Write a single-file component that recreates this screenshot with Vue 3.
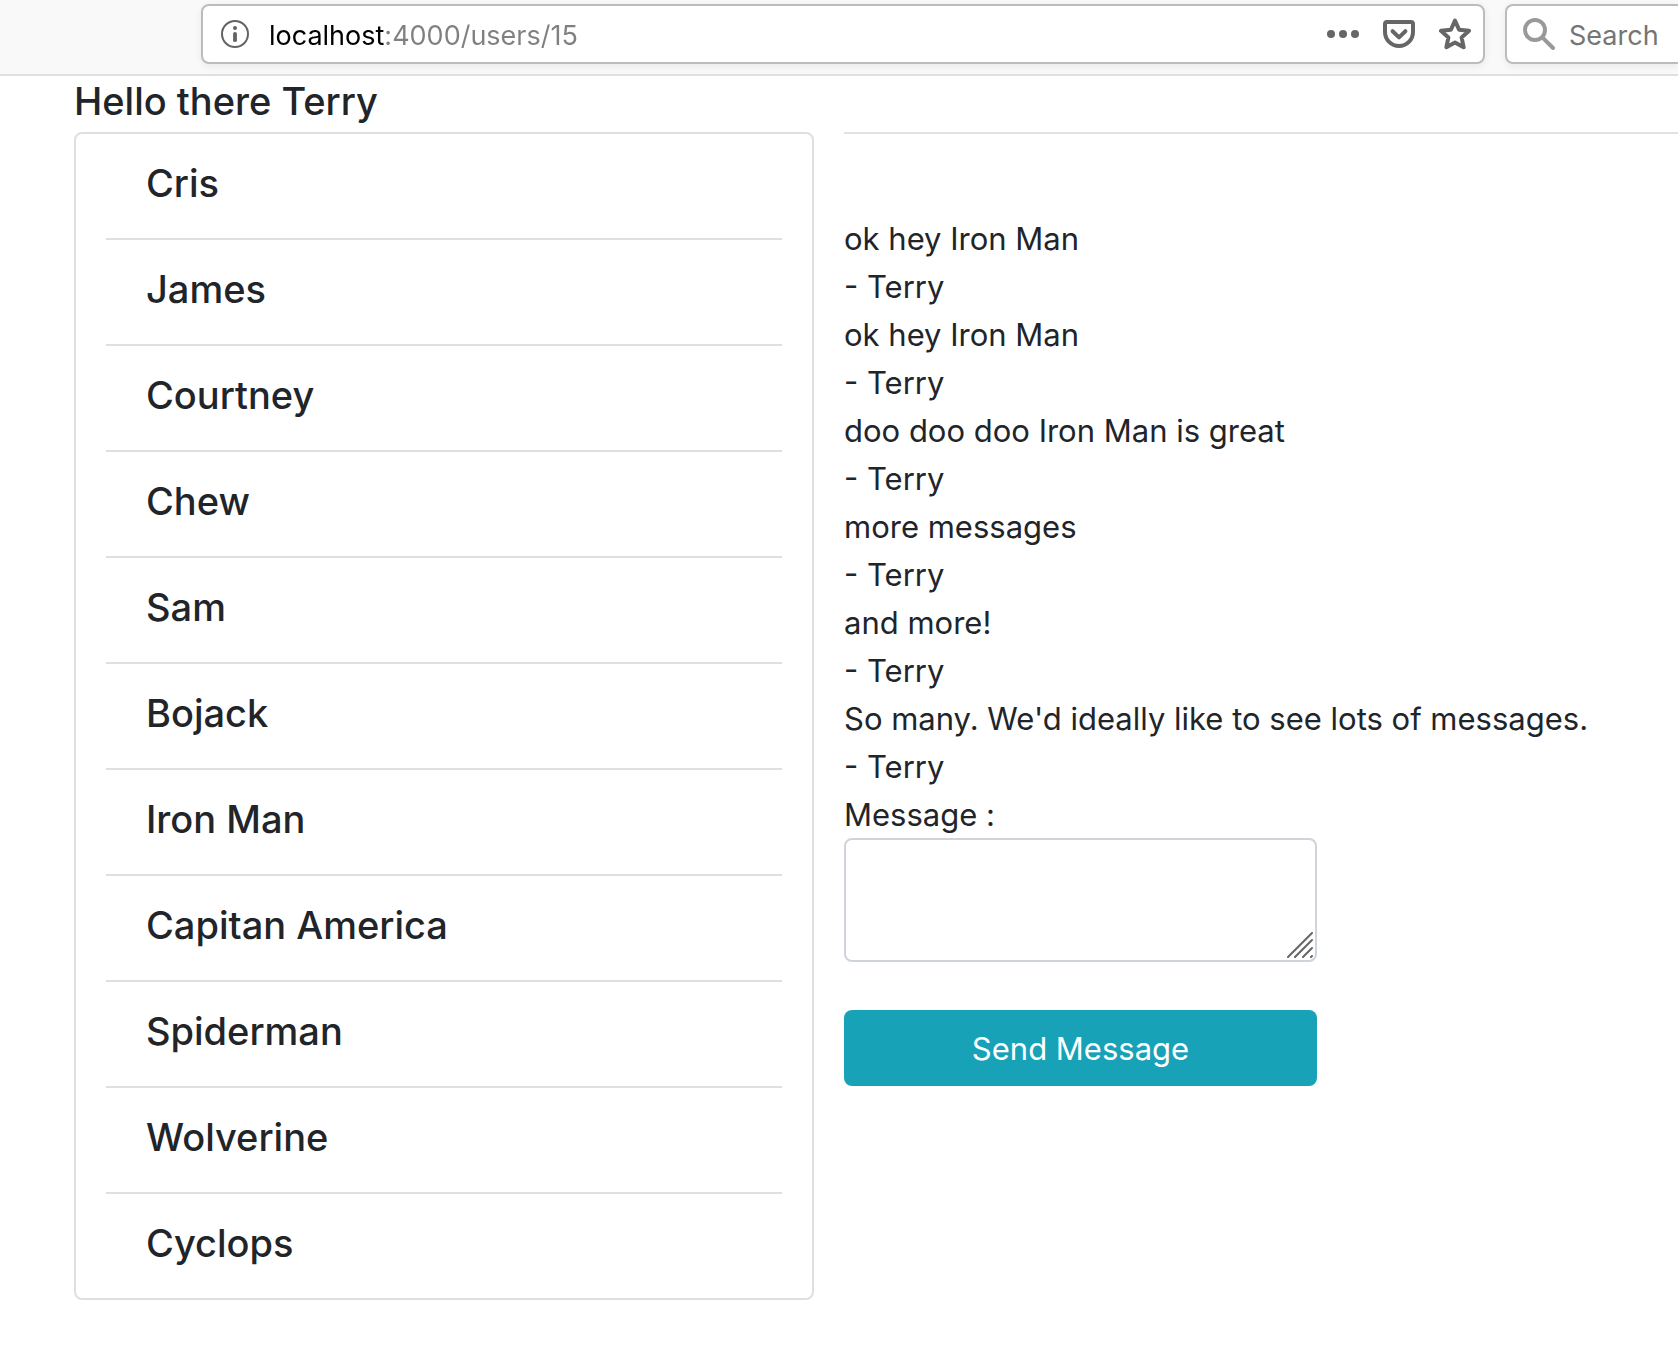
<script setup>
import { ref } from 'vue'

const address = ref('localhost:4000/users/15')
const search = ref('')
const draft = ref('')

const users = [
  'Cris',
  'James',
  'Courtney',
  'Chew',
  'Sam',
  'Bojack',
  'Iron Man',
  'Capitan America',
  'Spiderman',
  'Wolverine',
  'Cyclops',
]

const messages = ref([
  { text: 'ok hey Iron Man', author: 'Terry' },
  { text: 'ok hey Iron Man', author: 'Terry' },
  { text: 'doo doo doo Iron Man is great', author: 'Terry' },
  { text: 'more messages', author: 'Terry' },
  { text: 'and more!', author: 'Terry' },
  { text: "So many. We'd ideally like to see lots of messages.", author: 'Terry' },
])

function send() {
  const text = draft.value.trim()
  if (!text) return
  messages.value.push({ text, author: 'Terry' })
  draft.value = ''
}
</script>

<template>
  <div class="window">
    <header class="toolbar">
      <div class="field address">
        <button class="icon-button" type="button" aria-label="Site information">
          <svg width="28" height="28" viewBox="0 0 28 28">
            <circle cx="14" cy="14" r="13" fill="none" stroke="#636363" stroke-width="2" />
            <circle cx="14" cy="8" r="2" fill="#636363" />
            <path d="M14 13.8v6.4" stroke="#636363" stroke-width="3.8" stroke-linecap="round" />
          </svg>
        </button>
        <input v-model="address" class="address-input" type="text" aria-label="Address" spellcheck="false" />
        <div class="actions">
          <button class="icon-button" type="button" aria-label="Page actions">
            <svg width="32" height="32" viewBox="0 0 32 32" fill="#666">
              <circle cx="4" cy="16" r="4" />
              <circle cx="16" cy="16" r="4" />
              <circle cx="28" cy="16" r="4" />
            </svg>
          </button>
          <button class="icon-button" type="button" aria-label="Save to Pocket">
            <svg width="32" height="32" viewBox="0 0 32 32" fill="none" stroke="#666" stroke-width="4" stroke-linecap="round" stroke-linejoin="round">
              <path d="M4 4h24a2 2 0 0 1 2 2v8a14 14 0 0 1-28 0V6a2 2 0 0 1 2-2z" />
              <path d="M9.6 13.2l6.4 6.2 6.4-6.2" />
            </svg>
          </button>
          <button class="icon-button" type="button" aria-label="Bookmark this page">
            <svg width="32" height="32" viewBox="0 0 32 32" fill="none" stroke="#666" stroke-width="4" stroke-linejoin="round">
              <path d="M16 2.6l4.1 9.1 9.9 1.1-7.4 6.6 2 9.8L16 24.4l-8.6 4.8 2-9.8L2 12.8l9.9-1.1z" />
            </svg>
          </button>
        </div>
      </div>
      <div class="field search">
        <svg width="32" height="32" viewBox="0 0 32 32" fill="none" stroke="#999" stroke-width="4" stroke-linecap="round">
          <circle cx="12" cy="12" r="10" />
          <path d="M19.6 19.6L30 30" />
        </svg>
        <input v-model="search" class="search-input" type="text" placeholder="Search" aria-label="Search" />
      </div>
    </header>

    <main class="page">
      <h1 class="greeting">Hello there Terry</h1>
      <div class="columns">
        <ul class="users">
          <li v-for="user in users" :key="user" class="user">{{ user }}</li>
        </ul>
        <section class="chat">
          <div v-for="(message, i) in messages" :key="i" class="message">
            <p>{{ message.text }}</p>
            <p>- {{ message.author }}</p>
          </div>
          <form class="composer" @submit.prevent="send">
            <label for="draft">Message :</label>
            <div class="draft-box">
              <textarea id="draft" v-model="draft"></textarea>
              <svg class="grip" width="26" height="26" viewBox="0 0 26 26" stroke="#666" stroke-width="2" stroke-linecap="round">
                <path d="M1 25L25 1M8 25L25 8M16 25L25 16M24 25L25 24" />
              </svg>
            </div>
            <button class="send" type="submit">Send Message</button>
          </form>
        </section>
      </div>
    </main>
  </div>
</template>

<style>
body {
  margin: 0;
  background: #fff;
}
</style>

<style scoped>
.window {
  overflow-x: hidden;
  color: #212529;
  font-family: Inter, "Liberation Sans", sans-serif;
  font-size: 31px;
  line-height: 48px;
}

.window *,
.window *::before {
  box-sizing: border-box;
}

svg {
  display: block;
  flex: none;
}

.toolbar {
  display: flex;
  gap: 20px;
  height: 76px;
  padding: 4px 0 10px 201px;
  border-bottom: 2px solid #e0e0e0;
  background: #f9f9f9;
}

.field {
  display: flex;
  align-items: center;
  height: 60px;
  border: 2px solid #bcbcbc;
  background: #fff;
  box-shadow: 0 2px 8px rgba(0, 0, 0, 0.07);
}

.address {
  flex: 1;
  min-width: 0;
  gap: 20px;
  padding: 0 12px 0 18px;
  border-radius: 8px;
}

.search {
  flex: none;
  width: 173px;
  gap: 14px;
  padding-left: 16px;
  border-right: 0;
  border-radius: 8px 0 0 8px;
}

.actions {
  display: flex;
  gap: 24px;
}

.icon-button {
  padding: 0;
  border: 0;
  background: none;
}

.address-input,
.search-input {
  flex: 1;
  min-width: 0;
  height: 40px;
  padding: 2px 0 0;
  border: 0;
  outline: 0;
  background: none;
  font-family: inherit;
  font-size: 27px;
}

.address-input {
  background: linear-gradient(to right, #000 116px, #808080 116px);
  background-clip: text;
  -webkit-background-clip: text;
  color: transparent;
  caret-color: #000;
}

.search-input {
  color: #000;
}

.search-input::placeholder {
  color: #757575;
  opacity: 1;
}

.page {
  padding: 1px 0 70px 74px;
}

.greeting {
  margin: 0 0 7px;
  font-size: 38px;
  font-weight: 500;
}

.columns {
  display: grid;
  grid-template-columns: minmax(0, 740fr) minmax(0, 834fr);
  align-items: start;
  gap: 30px;
}

.users {
  margin: 0;
  padding: 0 30px;
  border: 2px solid #dfdfdf;
  border-radius: 8px;
  list-style: none;
}

.user {
  padding: 25px 40px 31px;
  font-size: 38px;
  font-weight: 500;
}

.user + .user {
  border-top: 2px solid #dfdfdf;
}

.chat {
  padding-top: 81px;
  border-top: 2px solid #dee2e6;
}

.message p {
  margin: 0;
}

.composer {
  display: flex;
  flex-direction: column;
  width: 473px;
  max-width: 100%;
}

.composer label {
  height: 47px;
}

.draft-box {
  position: relative;
  margin-bottom: 48px;
}

textarea {
  display: block;
  width: 100%;
  height: 124px;
  padding: 12px 24px;
  border: 2px solid #ced4da;
  border-radius: 8px;
  outline: 0;
  background: #fff;
  color: #495057;
  font: inherit;
  resize: none;
}

.grip {
  position: absolute;
  right: 4px;
  bottom: 4px;
  pointer-events: none;
}

.send {
  height: 76px;
  padding: 2px 24px 0;
  border: 0;
  border-radius: 8px;
  background: #17a2b8;
  color: #fff;
  font: inherit;
}
</style>
